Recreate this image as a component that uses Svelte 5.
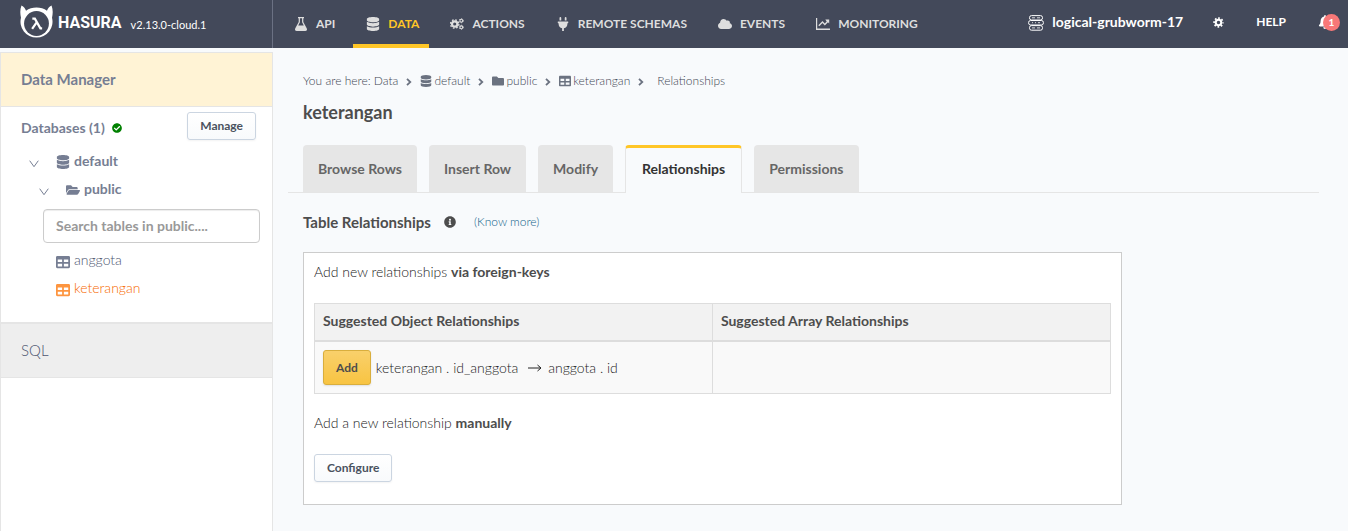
<script>
  const paths = {
    database: ['0 0 448 512', 'M448 73.143v45.714C448 159.143 347.667 192 224 192S0 159.143 0 118.857V73.143C0 32.857 100.333 0 224 0s224 32.857 224 73.143zM448 176v102.857C448 319.143 347.667 352 224 352S0 319.143 0 278.857V176c48.125 33.143 136.208 48.572 224 48.572S399.874 209.143 448 176zm0 160v102.857C448 479.143 347.667 512 224 512S0 479.143 0 438.857V336c48.125 33.143 136.208 48.572 224 48.572S399.874 369.143 448 336z'],
    table: ['0 0 512 512', 'M464 32H48C21.49 32 0 53.49 0 80v352c0 26.51 21.49 48 48 48h416c26.51 0 48-21.49 48-48V80c0-26.51-21.49-48-48-48zM224 416H64v-96h160v96zm0-160H64v-96h160v96zm224 160H288v-96h160v96zm0-160H288v-96h160v96z'],
    folder: ['0 0 512 512', 'M464 128H272l-64-64H48C21.49 64 0 85.49 0 112v288c0 26.51 21.49 48 48 48h416c26.51 0 48-21.49 48-48V176c0-26.51-21.49-48-48-48z'],
    folderOpen: ['0 0 576 512', 'M572.694 292.093L500.27 416.248A63.997 63.997 0 0 1 444.989 448H45.025c-18.523 0-30.064-20.093-20.731-36.093l72.424-124.155A64 64 0 0 1 152 256h399.964c18.523 0 30.064 20.093 20.73 36.093zM152 224h328v-48c0-26.51-21.49-48-48-48H272l-64-64H48C21.49 64 0 85.49 0 112v278.046l69.077-118.418C86.214 242.25 117.989 224 152 224z'],
    check: ['0 0 512 512', 'M504 256c0 136.967-111.033 248-248 248S8 392.967 8 256 119.033 8 256 8s248 111.033 248 248zM227.314 387.314l184-184c6.248-6.248 6.248-16.379 0-22.627l-22.627-22.627c-6.248-6.249-16.379-6.249-22.628 0L216 308.118l-70.059-70.059c-6.248-6.248-16.379-6.248-22.628 0l-22.627 22.627c-6.248 6.248-6.248 16.379 0 22.627l104 104c6.249 6.249 16.379 6.249 22.628.001z'],
    info: ['0 0 512 512', 'M256 8C119.043 8 8 119.083 8 256c0 136.997 111.043 248 248 248s248-111.003 248-248C504 119.083 392.957 8 256 8zm0 110c23.196 0 42 18.804 42 42s-18.804 42-42 42-42-18.804-42-42 18.804-42 42-42zm56 254c0 6.627-5.373 12-12 12h-88c-6.627 0-12-5.373-12-12v-24c0-6.627 5.373-12 12-12h12v-64h-12c-6.627 0-12-5.373-12-12v-24c0-6.627 5.373-12 12-12h64c6.627 0 12 5.373 12 12v100h12c6.627 0 12 5.373 12 12v24z'],
    cloud: ['0 0 640 512', 'M537.6 226.6c4.1-10.7 6.4-22.4 6.4-34.6 0-53-43-96-96-96-19.7 0-38.1 6-53.3 16.2C367 64.2 315.3 32 256 32c-88.4 0-160 71.6-160 160 0 2.7.1 5.4.2 8.1C40.2 219.8 0 273.2 0 336c0 79.5 64.5 144 144 144h368c70.7 0 128-57.3 128-128 0-61.9-44-113.6-102.4-125.4z'],
    plug: ['0 0 384 512', 'M320,32a32,32,0,0,0-64,0v96h64Zm48,128H16A16,16,0,0,0,0,176v32a16,16,0,0,0,16,16H32v32A160.07,160.07,0,0,0,160,412.8V512h64V412.8A160.07,160.07,0,0,0,352,256V224h16a16,16,0,0,0,16-16V176A16,16,0,0,0,368,160ZM128,32a32,32,0,0,0-64,0v96h64Z'],
    bell: ['0 0 448 512', 'M224 512c35.32 0 63.97-28.65 63.97-64H160.03c0 35.35 28.65 64 63.97 64zm215.39-149.71c-19.32-20.76-55.47-51.99-55.47-154.29 0-77.7-54.48-139.9-127.94-155.16V32c0-17.67-14.32-32-31.98-32s-31.98 14.33-31.98 32v20.84C118.56 68.1 64.08 130.3 64.08 208c0 102.3-36.15 133.53-55.47 154.29-6 6.45-8.66 14.16-8.61 21.71.11 16.4 12.98 32 32.1 32h383.8c19.12 0 32-15.6 32.1-32 .05-7.55-2.61-15.27-8.61-21.71z'],
    flask: ['0 0 12 14', 'M3 0h6v1.3H8.300V5l3.400 6.300C12.500 12.800 11.700 14 10.300 14H1.700C.3 14-.5 12.800.3 11.300L3.700 5V1.300H3zM4.900 1.300v4L3.200 8.500h5.600L7.100 5.300v-4z'],
    chart: ['0 0 14 12', 'M0 0h1.200v10.600H14V12H0zM9.300 1.500h3.900v3.900L12 4.200 8.800 7.400 6.500 5.100 3.300 8.300 2.300 7.300 6.500 3.100l2.300 2.300 1.900-1.900z']
  };
  const nav = [
    { label: 'API', icon: 'flask' },
    { label: 'DATA', icon: 'database', active: true },
    { label: 'ACTIONS', icon: 'gears' },
    { label: 'REMOTE SCHEMAS', icon: 'plug' },
    { label: 'EVENTS', icon: 'cloud' },
    { label: 'MONITORING', icon: 'chart' }
  ];
  const tabs = ['Browse Rows', 'Insert Row', 'Modify', 'Relationships', 'Permissions'];
  let current = $state('Relationships');
  let query = $state('');
</script>

{#snippet icon(name, size)}
  {#if name === 'gears'}
    <svg class="icon {size}" viewBox="0 0 14 12" fill="none" stroke="currentColor" aria-hidden="true">
      <circle cx="4.700" cy="6" r="2.700" stroke-width="2.200" />
      <circle cx="4.700" cy="6" r="4.200" stroke-width="1.300" stroke-dasharray="1.700 1.600" />
      <circle cx="11.300" cy="2.700" r="1.400" stroke-width="1.100" />
      <circle cx="11.300" cy="2.700" r="2.100" stroke-width=".8" stroke-dasharray="1 1.200" />
      <circle cx="11.300" cy="9.300" r="1.400" stroke-width="1.100" />
      <circle cx="11.300" cy="9.300" r="2.100" stroke-width=".8" stroke-dasharray="1 1.200" />
    </svg>
  {:else}
    <svg class="icon {size}" viewBox={paths[name][0]} fill="currentColor" aria-hidden="true"><path fill-rule="evenodd" d={paths[name][1]} /></svg>
  {/if}
{/snippet}

{#snippet chevron()}
  <svg class="sep" viewBox="0 0 6 8" fill="none" stroke="currentColor" stroke-width="1.800" aria-hidden="true"><path d="M1 .8 4.300 4 1 7.200" /></svg>
{/snippet}

{#snippet caret()}
  <svg class="caret" viewBox="0 0 10 8" fill="none" stroke="currentColor" aria-hidden="true"><path d="M.7.7 5 6.700 9.300.7" /></svg>
{/snippet}

<header>
  <div class="brand">
    <svg class="logo" viewBox="0 0 34 36" aria-hidden="true">
      <path fill="#fff" d="M1.500 0C4 1 5.500 3.500 6.200 5.500 12 1 22 1 27.800 5.500 28.500 3.500 30 1 32.500 0 34 4 34 8 33 12.500A16.500 16.500 0 1 1 1 12.500C0 8 0 4 1.500 0z" />
      <circle cx="17" cy="18.500" r="12.800" fill="#43495a" />
      <path fill="none" stroke="#fff" stroke-width="2.300" d="M12.700 13.500h2.600L21 23.500h1.800M17 17.700l-4.500 6.300" />
    </svg>
    <strong>HASURA</strong>
    <span class="version">v2.13.0-cloud.1</span>
  </div>
  <nav>
    {#each nav as item}
      <a href="#{item.label}" class:active={item.active}>{@render icon(item.icon, 'medium')}{item.label}</a>
    {/each}
  </nav>
  <div class="account">
    <a class="project" href="#project">
      <svg class="servers" viewBox="0 0 16 16" fill="none" stroke="currentColor" aria-hidden="true">
        <rect x="1.500" y=".6" width="13" height="4.400" rx="2" /><rect x=".6" y="5.500" width="14.800" height="4.500" rx="2" /><rect x="1.500" y="10.600" width="13" height="4.600" rx="2" />
        <path d="M4 2.800h3M9 2.800h3M4 7.700h1M7 7.700h1M10 7.700h2M4 12.900h3M9 12.900h3" stroke-width=".8" />
      </svg>
      logical-grubworm-17
    </a>
    <button aria-label="Settings">
      <svg class="cog" viewBox="0 0 12 12" fill="none" stroke="currentColor" aria-hidden="true"><circle cx="6" cy="6" r="3" stroke-width="2.200" /><circle cx="6" cy="6" r="4.800" stroke-width="1.800" stroke-dasharray="1.900 1.870" stroke-dashoffset=".95" /></svg>
    </button>
    <a class="help" href="#help">HELP</a>
    <button class="alerts" aria-label="Notifications">{@render icon('bell', 'medium')}<span>1</span></button>
  </div>
</header>

<div class="body">
  <aside>
    <a class="manager" href="#data">Data Manager</a>
    <div class="tree">
      <div class="databases">
        <div class="count"><span>Databases (1)</span>{@render icon('check', 'tiny')}</div>
        <button class="plain">Manage</button>
      </div>
      <button class="node">{@render caret()}{@render icon('database', 'medium')}default</button>
      <button class="node schema">{@render caret()}{@render icon('folderOpen', 'medium')}public</button>
      <input type="text" aria-label="Search tables" placeholder="Search tables in public...." bind:value={query} />
      <ul>
        <li><a href="#anggota">{@render icon('table', 'medium')}<span>anggota</span></a></li>
        <li><a class="current" href="#keterangan">{@render icon('table', 'medium')}<span>keterangan</span></a></li>
      </ul>
    </div>
    <a class="sql" href="#sql">SQL</a>
  </aside>

  <main>
    <div class="crumbs">
      <span>You are here: Data</span>{@render chevron()}
      <a href="#default">{@render icon('database', 'small')}default</a>{@render chevron()}
      <a href="#public">{@render icon('folder', 'small')}public</a>{@render chevron()}
      <a href="#keterangan">{@render icon('table', 'small')}keterangan</a>{@render chevron()}
      <span class="last">Relationships</span>
    </div>
    <h1>keterangan</h1>
    <div class="tabs" role="tablist">
      {#each tabs as tab}
        <button role="tab" aria-selected={tab === current} class:selected={tab === current} onclick={() => (current = tab)}>{tab}</button>
      {/each}
    </div>
    <div class="title">
      <h2>Table Relationships</h2>
      {@render icon('info', 'small')}
      <a href="#more">(Know more)</a>
    </div>
    <section>
      <p>Add new relationships <b>via foreign-keys</b></p>
      <table>
        <thead><tr><th>Suggested Object Relationships</th><th>Suggested Array Relationships</th></tr></thead>
        <tbody>
          <tr>
            <td>
              <div class="suggestion">
                <button class="add">Add</button>
                <span>keterangan . id_anggota</span>
                <svg class="arrow" viewBox="0 0 14 8" fill="none" stroke="currentColor" role="img" aria-label="to"><path d="M0 4h12.500M9.500 1l3.500 3-3.500 3" /></svg>
                <span>anggota . id</span>
              </div>
            </td>
            <td></td>
          </tr>
        </tbody>
      </table>
      <p>Add a new relationship <b>manually</b></p>
      <button class="plain">Configure</button>
    </section>
  </main>
</div>

<style>
  :global(body) { margin: 0; background: #f8fafc; }
  :global(#app) { font: 300 14px/20px Lato, "Noto Sans", sans-serif; color: #222; min-height: 100vh; display: flex; flex-direction: column; }
  :global(#app *) { box-sizing: border-box; }
  a { color: inherit; text-decoration: none; }
  b, h1, h2, th, .add, .title .icon { color: #4d4d4d; font-weight: 700; }
  button { font: inherit; color: inherit; background: none; border: 0; padding: 0; cursor: pointer; }
  svg { flex: none; }
  .medium { width: 14px; height: 14px; }
  .small { width: 12px; height: 12px; }
  .tiny { width: 10px; height: 10px; }

  header { display: flex; height: 48px; background: #43495a; color: #fff; flex: none; }
  .brand { width: 273px; flex: none; display: flex; align-items: center; padding: 0 0 2px 20px; border-right: 1px solid #6b7183; }
  .logo { width: 33px; height: 36px; }
  .brand strong { font: 700 16px/24px Roboto, sans-serif; margin-left: 5px; }
  .version { font-size: 11px; font-weight: 400; margin: 4px 0 0 9px; }
  nav { display: flex; padding-left: 8px; }
  nav a { display: flex; align-items: center; gap: 8px; padding: 4px 10px 0 13px; margin-right: 8px; border-bottom: 4px solid transparent; color: #dedede; font-size: 12px; font-weight: 700; }
  nav a.active { color: #ffc627; border-color: #ffc627; }
  nav a.active .icon { color: #dedede; }
  .account { margin-left: auto; display: flex; align-items: center; padding: 0 8px 4px 0; font-weight: 700; }
  .project { display: flex; align-items: center; gap: 8px; }
  .servers { width: 16px; height: 16px; margin-top: 2px; }
  .cog { width: 11px; height: 11px; margin-left: 30px; display: block; }
  .help { font-size: 12px; margin-left: 32px; }
  .alerts { display: flex; align-items: center; margin-left: 32px; }
  .alerts span { width: 17px; height: 17px; border-radius: 50%; background: #f87878; font-size: 10px; font-weight: 700; line-height: 17px; margin-left: -9px; }

  .body { flex: 1; display: flex; }
  aside { width: 273px; flex: none; margin-top: 4px; background: #fff; border: 1px solid #e5e5e5; border-bottom: 0; color: #767e93; }
  .manager { display: block; padding: 16px 20px; height: 54px; background: #fff3d5; border-bottom: 1px solid #e5e5e5; font-size: 15px; font-weight: 700; }
  .tree { padding: 5px 12px 15px 20px; font-weight: 700; }
  .databases { display: flex; align-items: center; justify-content: space-between; height: 28px; margin-bottom: 7px; padding-right: 4px; }
  .count { display: flex; align-items: center; gap: 7px; padding-top: 3px; }
  .count .icon { color: #008000; }
  .plain { height: 28px; padding: 0 12px; border: 1px solid #cbd5e1; border-radius: 3px; background: linear-gradient(#fff, #f8fafc); box-shadow: 0 1px 2px #0000000d; font-size: 12px; font-weight: 700; color: #4a5260; }
  .node { display: flex; align-items: center; height: 28px; padding-left: 8px; font-weight: 700; }
  .node .icon { margin: 2px 4px 0 17px; }
  .schema { padding-left: 18px; }
  .caret { width: 10px; height: 8px; margin-top: 5px; }
  input { display: block; width: 217px; height: 34px; margin: 6px 0 7px 22px; padding: 0 12px 2px; border: 1px solid #ccc; border-radius: 4px; font: inherit; color: #555; background: #fff; box-shadow: inset 0 1px 1px #00000013; }
  input::placeholder { color: #999; opacity: 1; }
  ul { list-style: none; margin: 0; padding: 0 0 1px 35px; font-weight: 300; }
  li a { display: flex; align-items: center; gap: 4px; height: 28px; padding-bottom: 8px; }
  li .icon { margin-top: 3px; }
  li span { color: #4c5570; }
  .current { color: #fd9540; }
  .current span { color: #f76a00; }
  .sql { display: block; padding: 16px 20px; height: 56px; background: #eee; border-top: 2px solid #e5e5e5; border-bottom: 1px solid #e5e5e5; font-size: 15px; color: #4c5570; }

  main { flex: 1; min-width: 0; padding: 23px 29px 26px 15px; }
  .crumbs { display: flex; align-items: center; padding-left: 15px; font-size: 12px; color: #3f4654; }
  .crumbs svg { color: #6b7280; }
  .crumbs a { display: flex; align-items: center; gap: 2px; }
  .sep { width: 6px; height: 8px; margin: 2px 8px 0; }
  .last { margin-left: 5px; }
  h1 { margin: 10px 0 22px 15px; font-size: 18px; line-height: 22px; }
  .tabs { display: flex; gap: 12px; padding-left: 15px; border-bottom: 1px solid #e5e5e5; }
  .tabs button { height: 47px; padding: 0 15px; border-radius: 4px 4px 0 0; background: #e6e6e6; color: #666; font-weight: 700; }
  .tabs .selected { height: 48px; margin-bottom: -1px; padding: 0 16px 3px; border: solid #e5e5e5; border-width: 3px 1px 0; border-top-color: #ffc627; background: #f8fafc; color: #333; }
  .title { display: flex; align-items: center; margin: 19px 0 20px 15px; }
  h2 { font-size: 15px; line-height: 20px; margin: 0 13px 0 0; }
  .title a { color: #0f5f8a; font-size: 12px; margin-left: 18px; }
  section { width: calc(80% - 6px); min-height: 253px; margin-left: 15px; padding: 9px 10px; border: 1px solid #ccc; background: #fff; }
  p { margin: 0 0 21px; }
  table { width: 100%; table-layout: fixed; border-collapse: collapse; margin-bottom: 19px; }
  th, td { border: 1px solid #ddd; padding: 8px; text-align: left; }
  th { background: #f2f2f2; border-bottom-width: 2px; padding: 7px 8px 9px; }
  td { background: #f9f9f9; }
  .suggestion { display: flex; align-items: center; }
  .add { height: 35px; padding: 0 12px; margin-right: 5px; border: 1px solid #d9ae3d; border-radius: 3px; background: linear-gradient(#f9d06b, #f8c442); font-size: 12px; font-weight: 700; box-shadow: 0 1px 2px #0000001a; }
  .arrow { width: 14px; height: 8px; margin: 0 6px 0 10px; }
</style>
